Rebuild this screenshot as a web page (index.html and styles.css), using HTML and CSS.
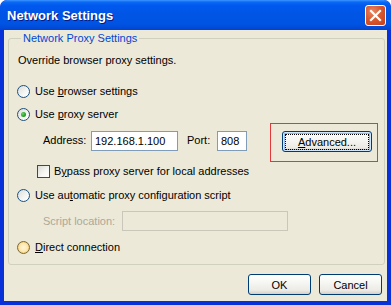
FILE: index.html
```html
<!DOCTYPE html>
<html lang="en">
<head>
    <meta charset="UTF-8">
    <title>Network Settings</title>
    <link rel="stylesheet" href="styles.css">
</head>
<body>
    <div class="window">
        <!-- Title bar -->
        <div class="titlebar">
            <span class="title">Network Settings</span>
            <span class="close-btn">
                <svg width="13" height="13" viewBox="0 0 13 13">
                    <path d="M2 2 L11 11 M11 2 L2 11" stroke="#fff" stroke-width="2.2" stroke-linecap="square"/>
                </svg>
            </span>
        </div>

        <!-- Client area -->
        <div class="client">
            <fieldset class="group">
                <legend>Network Proxy Settings</legend>
                <div class="row note">Override browser proxy settings.</div>

                <div class="row radio-row r1">
                    <span class="radio"></span>
                    <span>Use <u>b</u>rowser settings</span>
                </div>
                <div class="row radio-row r2">
                    <span class="radio checked"></span>
                    <span>Use <u>p</u>roxy server</span>
                </div>

                <div class="row address-row">
                    <span class="label addr-label">Address:</span>
                    <span class="input addr-input">192.168.1.100</span>
                    <span class="label port-label">Port:</span>
                    <span class="input port-input">808</span>
                    <div class="highlight">
                        <span class="button focused"><span class="focus-text"><u>A</u>dvanced...</span></span>
                    </div>
                </div>

                <div class="row check-row">
                    <span class="checkbox"></span>
                    <span>B<u>y</u>pass proxy server for local addresses</span>
                </div>

                <div class="row radio-row r3">
                    <span class="radio"></span>
                    <span>Use au<u>t</u>omatic proxy configuration script</span>
                </div>

                <div class="row script-row">
                    <span class="label disabled">Script location:</span>
                    <span class="input disabled-input"></span>
                </div>

                <div class="row radio-row r4">
                    <span class="radio hover"></span>
                    <span><u>D</u>irect connection</span>
                </div>
            </fieldset>

            <div class="footer">
                <span class="button">OK</span>
                <span class="button">Cancel</span>
            </div>
        </div>
    </div>
</body>
</html>
```

FILE: styles.css
```css
html, body {
    margin: 0;
    padding: 0;
    background: #ffffff;
}
body {
    font-family: "Liberation Sans", Arial, sans-serif;
    font-size: 11px;
    color: #000;
}
u {
    text-decoration: underline;
    text-underline-offset: 1px;
}
.window {
    width: 391px;
    height: 305px;
    box-sizing: border-box;
    background: #0831d9;
    border-radius: 7px 7px 0 0;
    display: flex;
    flex-direction: column;
    overflow: hidden;
}
.titlebar {
    height: 30px;
    flex: none;
    display: flex;
    align-items: center;
    padding: 0 5px 0 7px;
    background: linear-gradient(#3d95ff 0, #0a6af3 2px, #0058ee 6px, #0055e5 14px, #0054e3 24px, #0044d0 30px);
    border-radius: 7px 7px 0 0;
}
.title {
    flex: 1;
    color: #fff;
    font-weight: bold;
    font-size: 13px;
    padding-top: 1px;
    text-shadow: 1px 1px 0 #0a1883;
}
.close-btn {
    width: 19px;
    height: 19px;
    margin-right: 0;
    margin-top: 1px;
    border: 1px solid #fff;
    border-radius: 3px;
    background: radial-gradient(circle at 35% 30%, #e58a66 0, #d9582f 45%, #c2411c 100%);
    display: flex;
    align-items: center;
    justify-content: center;
}
.client {
    flex: 1;
    margin: 0 4px 4px 4px;
    background: #ece9d8;
    display: flex;
    flex-direction: column;
}
.group {
    margin: 1px 2px 0 4px;
    padding: 0 0 9px 8px;
    border: 1px solid #d0d0bf;
    border-radius: 3px;
    display: flex;
    flex-direction: column;
}
.group legend {
    color: #0046d5;
    padding: 0 2px;
    margin-left: 4px;
    line-height: 14px;
}
.row {
    display: flex;
    align-items: center;
}
.note {
    height: 13px;
    margin-top: 8px;
    padding-left: 1px;
}
.radio-row {
    height: 16px;
    gap: 5px;
}
.r1 { margin-top: 17px; }
.r2 { margin-top: 7px; }
.r3 { margin-top: 9px; }
.r4 { margin-top: 8px; }
.radio {
    width: 11px;
    height: 11px;
    border: 1px solid #1c5180;
    border-radius: 50%;
    background: linear-gradient(135deg, #dcdbd5 0, #f6f6f4 60%, #ffffff 100%);
    position: relative;
    flex: none;
}
.radio.checked::after {
    content: "";
    position: absolute;
    left: 3px;
    top: 3px;
    width: 5px;
    height: 5px;
    border-radius: 50%;
    background: radial-gradient(circle at 35% 35%, #6bd36b 0, #21a121 60%, #1a8a1a 100%);
}
.radio.hover {
    background: radial-gradient(circle, #fff6d9 0, #fce9b2 50%, #f8c85c 80%, #e9a63a 100%);
    border-color: #7a6a3a;
}
.address-row {
    height: 39px;
    margin-top: 1px;
    align-items: flex-start;
}
.label {
    line-height: 13px;
}
.addr-label {
    margin: 11px 0 0 26px;
    width: 48px;
}
.input {
    height: 18px;
    border: 1px solid #7f9db9;
    background: #fff;
    box-sizing: content-box;
    line-height: 18px;
    padding: 0 3px;
    margin-top: 8px;
}
.addr-input {
    width: 79px;
}
.port-label {
    margin: 11px 0 0 9px;
    width: 30px;
}
.port-input {
    width: 22px;
}
.highlight {
    margin-left: 23px;
    width: 90px;
    height: 21px;
    padding: 7px 5px 9px 11px;
    border: 1px solid #e23a3a;
}
.button {
    box-sizing: border-box;
    display: flex;
    align-items: center;
    justify-content: center;
    border: 1px solid #003c74;
    border-radius: 3px;
    background: linear-gradient(#ffffff 0, #f6f6f2 40%, #ecebe6 80%, #d6d0c5 100%);
    height: 21px;
}
.highlight .button {
    width: 90px;
}
.button.focused {
    box-shadow: inset 0 0 0 1px #cee7ff, inset 0 0 0 2px #98b8ea;
}
.focus-text {
    outline: 1px dotted #000;
    padding: 1px 12px 1px 12px;
    line-height: 12px;
}
.check-row {
    height: 14px;
    margin-top: 2px;
    padding-left: 20px;
    gap: 4px;
}
.checkbox {
    width: 11px;
    height: 11px;
    border: 1px solid #1c5180;
    background: linear-gradient(135deg, #dcdbd5 0, #f6f6f4 60%, #ffffff 100%);
    flex: none;
}
.script-row {
    height: 20px;
    margin-top: 8px;
}
.disabled {
    color: #aca899;
    margin-left: 26px;
    width: 79px;
}
.disabled-input {
    margin-top: 0;
    width: 158px;
    border-color: #c9c7ba;
    background: #ece9d8;
}
.footer {
    display: flex;
    justify-content: flex-end;
    gap: 8px;
    margin: 9px 5px 0 0;
}
.footer .button {
    width: 63px;
}
```
